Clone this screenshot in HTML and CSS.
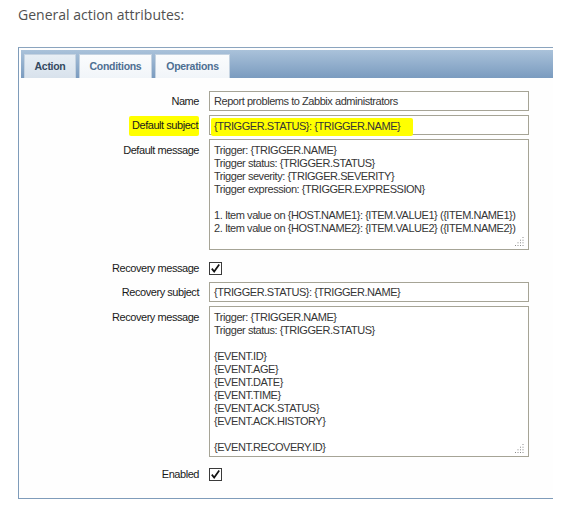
FILE: index.html
```html
<!DOCTYPE html>
<html lang="en">
<head>
<meta charset="utf-8">
<title>General action attributes</title>
<link rel="stylesheet" href="styles.css">
</head>
<body>
<div class="page">
  <h2 class="title">General action attributes:</h2>
  <div class="frame">
    <div class="tabbar">
      <div class="tab tab-action active">Action</div>
      <div class="tab tab-conditions">Conditions</div>
      <div class="tab tab-operations">Operations</div>
    </div>
    <div class="form">
      <div class="label">Name</div>
      <div class="input">Report problems to Zabbix administrators</div>

      <div class="label"><mark class="hl-label">Default subject</mark></div>
      <div class="input"><mark class="hl-value">{TRIGGER.STATUS}: {TRIGGER.NAME}</mark></div>

      <div class="label label-top">Default message</div>
      <div class="textarea ta-default"><div class="ta-text">Trigger: {TRIGGER.NAME}
Trigger status: {TRIGGER.STATUS}
Trigger severity: {TRIGGER.SEVERITY}
Trigger expression: {TRIGGER.EXPRESSION}

1. Item value on {HOST.NAME1}: {ITEM.VALUE1} ({ITEM.NAME1})
2. Item value on {HOST.NAME2}: {ITEM.VALUE2} ({ITEM.NAME2})</div><svg class="grip" width="9" height="9" viewBox="0 0 9 9"><g fill="#8a8a8a"><rect x="7.5" y="0" width="1" height="1"/><rect x="5" y="2.7" width="1" height="1"/><rect x="7.5" y="2.7" width="1" height="1"/><rect x="2.5" y="5.3" width="1" height="1"/><rect x="5" y="5.3" width="1" height="1"/><rect x="7.5" y="5.3" width="1" height="1"/><rect x="0" y="8" width="1" height="1"/><rect x="2.5" y="8" width="1" height="1"/><rect x="5" y="8" width="1" height="1"/><rect x="7.5" y="8" width="1" height="1"/></g></svg></div>

      <div class="label check-row first-check">Recovery message</div>
      <div class="check-cell check-row first-check"><svg class="check" width="13" height="13" viewBox="0 0 13 13"><rect x="0.5" y="0.5" width="12" height="12" fill="#fff" stroke="#3a3a3a"/><path d="M2.8 6.6 L5.2 9.6 L10.2 2.6" fill="none" stroke="#111" stroke-width="1.7"/></svg></div>

      <div class="label">Recovery subject</div>
      <div class="input">{TRIGGER.STATUS}: {TRIGGER.NAME}</div>

      <div class="label label-top">Recovery message</div>
      <div class="textarea ta-recovery"><div class="ta-text">Trigger: {TRIGGER.NAME}
Trigger status: {TRIGGER.STATUS}

{EVENT.ID}
{EVENT.AGE}
{EVENT.DATE}
{EVENT.TIME}
{EVENT.ACK.STATUS}
{EVENT.ACK.HISTORY}

{EVENT.RECOVERY.ID}</div><svg class="grip" width="9" height="9" viewBox="0 0 9 9"><g fill="#8a8a8a"><rect x="7.5" y="0" width="1" height="1"/><rect x="5" y="2.7" width="1" height="1"/><rect x="7.5" y="2.7" width="1" height="1"/><rect x="2.5" y="5.3" width="1" height="1"/><rect x="5" y="5.3" width="1" height="1"/><rect x="7.5" y="5.3" width="1" height="1"/><rect x="0" y="8" width="1" height="1"/><rect x="2.5" y="8" width="1" height="1"/><rect x="5" y="8" width="1" height="1"/><rect x="7.5" y="8" width="1" height="1"/></g></svg></div>

      <div class="label check-row last-check">Enabled</div>
      <div class="check-cell check-row last-check"><svg class="check" width="13" height="13" viewBox="0 0 13 13"><rect x="0.5" y="0.5" width="12" height="12" fill="#fff" stroke="#3a3a3a"/><path d="M2.8 6.6 L5.2 9.6 L10.2 2.6" fill="none" stroke="#111" stroke-width="1.7"/></svg></div>
    </div>
  </div>
</div>
</body>
</html>
```

FILE: styles.css
```css
* {
  box-sizing: border-box;
}

html, body {
  margin: 0;
  background: #ffffff;
}

body {
  font-family: "Liberation Sans", Arial, sans-serif;
}

.page {
  padding-left: 18px;
  width: 572px;
}

.title {
  margin: 5px 0 22px;
  font-family: "Open Sans", sans-serif;
  font-weight: 400;
  font-size: 14px;
  line-height: 20px;
  color: #505050;
}

.frame {
  width: 535px;
  border-top: 1px solid #8ba4be;
  border-left: 1px solid #7f9cba;
  border-bottom: 1px solid #7f9cba;
  padding: 2px 0 0 2px;
  background: #fefefe;
}

.tabbar {
  display: flex;
  gap: 3px;
  height: 28px;
  padding: 4px 0 0 3px;
  background: linear-gradient(#aac2da, #7a9bbf);
}

.tab {
  height: 24px;
  padding: 0;
  text-align: center;
  line-height: 23px;
  background: linear-gradient(#fbfcfd, #f1f5f9);
  border: 1px solid #c5d3e1;
  border-bottom: 0;
  font-size: 10.5px;
  font-weight: bold;
  letter-spacing: -0.3px;
  color: #4e6f92;
}

.tab-action {
  width: 52px;
}

.tab-conditions {
  width: 73px;
}

.tab-operations {
  width: 75px;
}

.tab.active {
  background: linear-gradient(#e7eef5, #d8e2ec);
  color: #34495f;
}

.form {
  display: grid;
  grid-template-columns: 178px 320px;
  column-gap: 10px;
  row-gap: 4px;
  padding: 13px 0 14px;
}

.label {
  display: flex;
  justify-content: flex-end;
  align-items: center;
  height: 20px;
  font-size: 11px;
  letter-spacing: -0.45px;
  color: #1a1a1a;
  white-space: nowrap;
}

.label-top {
  height: auto;
  align-items: flex-start;
  line-height: 13px;
  padding-top: 5px;
}

.input {
  display: flex;
  align-items: center;
  height: 20px;
  padding: 0 4px;
  border: 1px solid #a6a496;
  background: #ffffff;
  font-size: 11px;
  letter-spacing: -0.45px;
  color: #363636;
  white-space: nowrap;
}

.textarea {
  position: relative;
  padding: 4px;
  border: 1px solid #a6a496;
  background: #ffffff;
  font-size: 11px;
  letter-spacing: -0.45px;
  line-height: 13px;
  color: #363636;
}

.ta-text {
  white-space: pre;
}

.ta-default {
  height: 111px;
}

.ta-recovery {
  height: 151px;
}

.grip {
  position: absolute;
  right: 4px;
  bottom: 3px;
}

.check-row {
  height: 20px;
}

.check-cell {
  display: flex;
  align-items: center;
}

.first-check {
  margin-top: 4px;
}

.last-check {
  margin-top: 3px;
}

.check {
  display: block;
}

mark {
  color: inherit;
  background: #ffff00;
}

.hl-label {
  display: inline-block;
  line-height: 13px;
  padding: 3px 1px 4px 3px;
  margin-top: 2px;
  border-radius: 2px;
}

.hl-value {
  display: inline-block;
  line-height: 13px;
  padding: 2.5px 13px 2.5px 3px;
  margin: 3px 0 0 -3px;
  border-radius: 2px;
}
```
